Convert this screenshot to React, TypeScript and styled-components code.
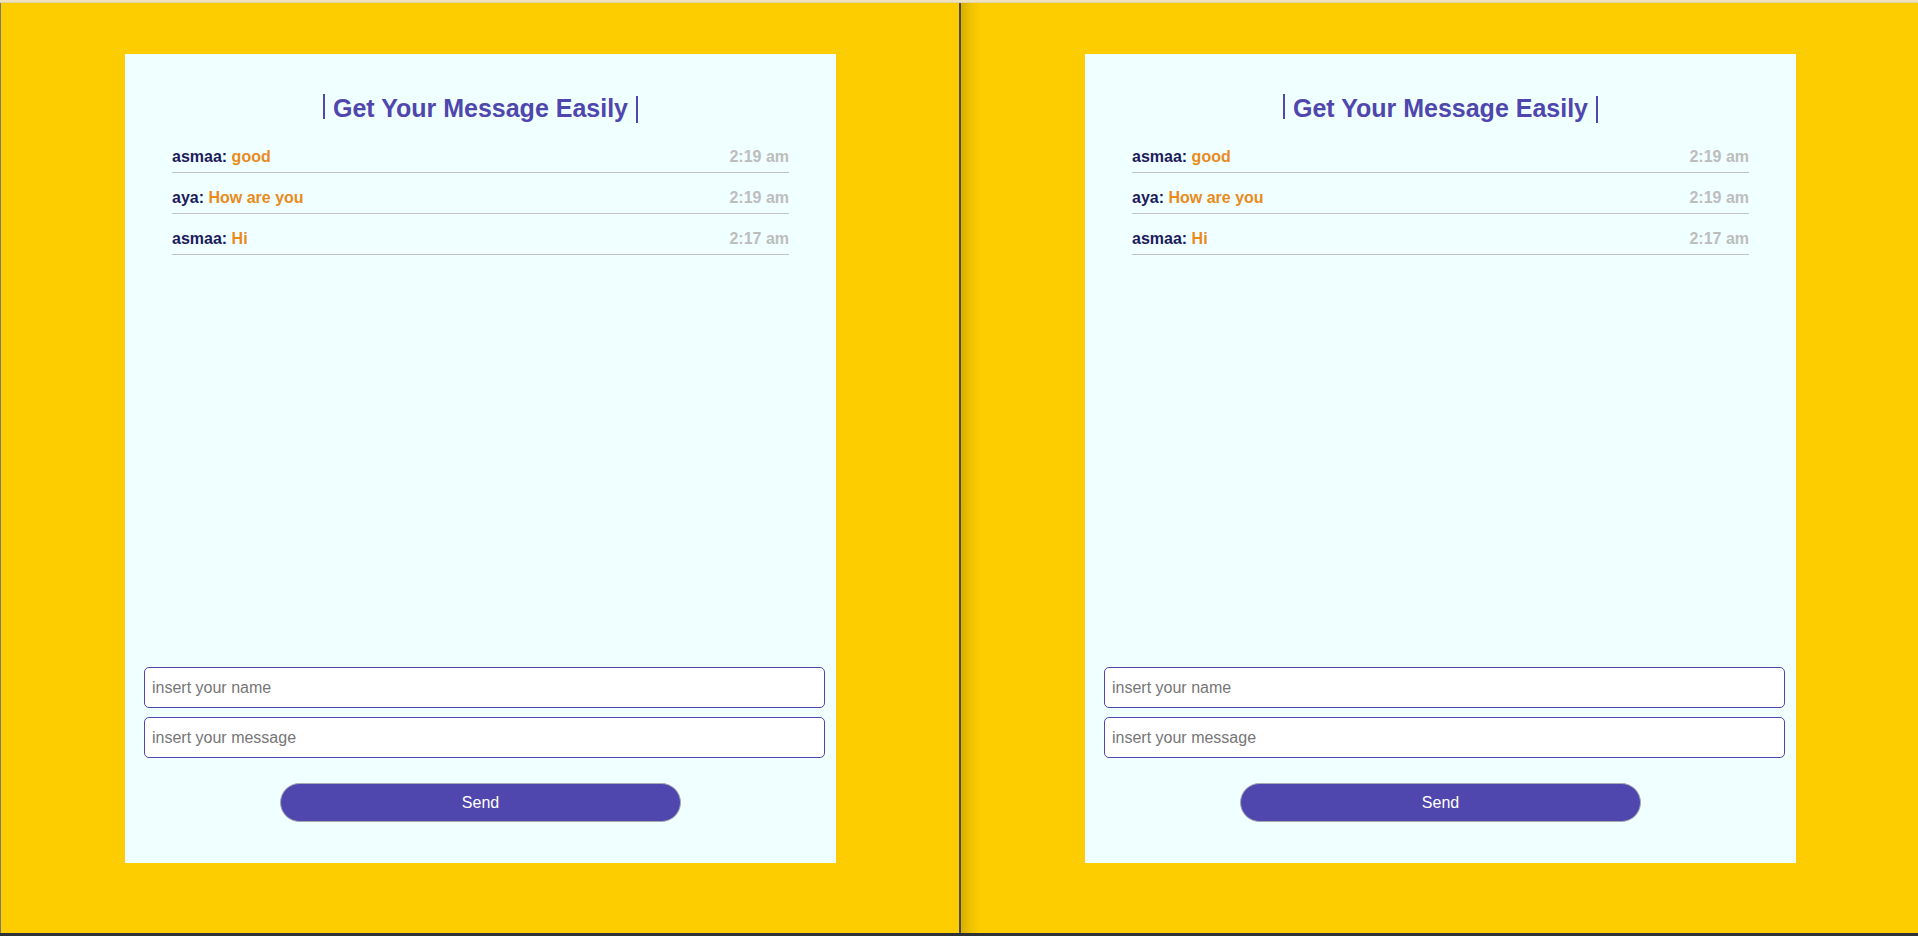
import React from "react";
import styled, { createGlobalStyle } from "styled-components";

const GlobalStyle = createGlobalStyle`
  html, body {
    margin: 0;
    padding: 0;
    overflow: hidden;
    font-family: "Liberation Sans", Arial, sans-serif;
  }
  * { box-sizing: border-box; }
`;

const Screen = styled.div`
  width: 1918px;
  height: 936px;
  display: flex;
  flex-direction: column;
  background: #2a2f33;
`;

const TopStrip = styled.div`
  height: 3px;
  background: #efe2bf;
  border-bottom: 1px solid #e3d2a6;
`;

const Windows = styled.div`
  flex: 1;
  display: flex;
  min-height: 0;
`;

const BottomStrip = styled.div`
  height: 3px;
  background: #2c3236;
`;

const Window = styled.div<{ $first?: boolean }>`
  width: ${(p) => (p.$first ? "959px" : "957px")};
  background: #fecd00;
  padding-top: 51px;
  padding-left: 124px;
  border-left: ${(p) => (p.$first ? "1px solid #7a7a7a" : "none")};
  ${(p) =>
    !p.$first &&
    `background: linear-gradient(to right, #d8ae00 0px, #f0c300 10px, #fecd00 20px, #fecd00 100%);`}
`;

const Divider = styled.div`
  width: 2px;
  background: #4a4a4a;
`;

const Card = styled.div`
  width: 711px;
  height: 809px;
  background: #f0ffff;
  display: flex;
  flex-direction: column;
  padding-top: 40px;
`;

const TitleRow = styled.div`
  display: flex;
  justify-content: center;
  align-items: flex-start;
  height: 29px;
`;

const TitleBar = styled.span<{ $offset: number; $height: number }>`
  display: block;
  width: 2px;
  margin-top: ${(p) => p.$offset}px;
  height: ${(p) => p.$height}px;
  background: #4f46ae;
`;

const TitleText = styled.h1`
  margin: 0;
  padding: 0 8px 0 8px;
  font-size: 25px;
  line-height: 28px;
  font-weight: 700;
  color: #4f46ae;
`;

const MessageList = styled.ul`
  list-style: none;
  margin: 9px 47px 0;
  padding: 0;
  flex: 1;
`;

const MessageRow = styled.li`
  display: flex;
  justify-content: space-between;
  align-items: baseline;
  padding: 16px 0 6px;
  line-height: 18px;
  font-size: 16px;
  font-weight: 700;
  border-bottom: 1px solid #c3c3c3;
`;

const Author = styled.span`
  color: #1c1c5c;
`;

const Body = styled.span`
  color: #ea8a1c;
`;

const Time = styled.span`
  color: #bdbdbd;
`;

const Form = styled.form`
  display: flex;
  flex-direction: column;
  padding: 0 11px 41px 19px;
`;

const Field = styled.input`
  width: 681px;
  height: 41px;
  margin: 0 0 9px;
  padding: 0 0 0 7px;
  border: 1px solid #4f46ae;
  border-radius: 5px;
  background: #ffffff;
  font-family: "Liberation Sans", Arial, sans-serif;
  font-size: 16px;
  color: #222;
  outline: none;
  &::placeholder {
    color: #767676;
  }
`;

const SendButton = styled.button`
  align-self: center;
  margin: 16px 0 0 -8px;
  width: 401px;
  height: 39px;
  border-radius: 20px;
  border: 1px solid #a9a9b5;
  background: #4f46ae;
  color: #ffffff;
  font-family: "Liberation Sans", Arial, sans-serif;
  font-size: 16px;
  cursor: pointer;
`;

type Msg = { name: string; text: string; time: string };

const messages: Msg[] = [
  { name: "asmaa", text: "good", time: "2:19 am" },
  { name: "aya", text: "How are you", time: "2:19 am" },
  { name: "asmaa", text: "Hi", time: "2:17 am" },
];

const ChatCard: React.FC = () => (
  <Card>
    <TitleRow>
      <TitleBar $offset={0} $height={25} />
      <TitleText>Get Your Message Easily</TitleText>
      <TitleBar $offset={2} $height={27} />
    </TitleRow>
    <MessageList>
      {messages.map((m, i) => (
        <MessageRow key={i}>
          <span>
            <Author>{m.name}: </Author>
            <Body>{m.text}</Body>
          </span>
          <Time>{m.time}</Time>
        </MessageRow>
      ))}
    </MessageList>
    <Form onSubmit={(e) => e.preventDefault()}>
      <Field placeholder="insert your name" />
      <Field placeholder="insert your message" />
      <SendButton type="submit">Send</SendButton>
    </Form>
  </Card>
);

export default function App() {
  return (
    <>
      <GlobalStyle />
      <Screen>
        <TopStrip />
        <Windows>
          <Window $first>
            <ChatCard />
          </Window>
          <Divider />
          <Window>
            <ChatCard />
          </Window>
        </Windows>
        <BottomStrip />
      </Screen>
    </>
  );
}
